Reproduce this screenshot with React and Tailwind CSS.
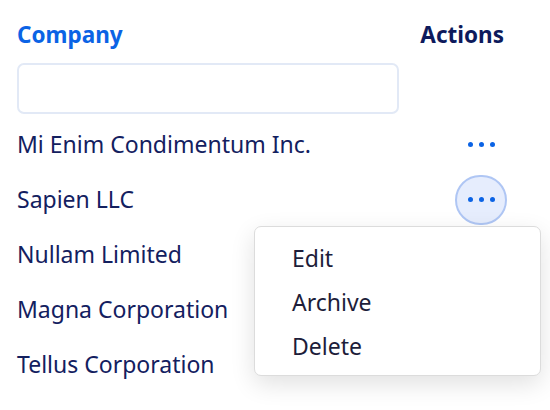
import React from 'react'

const companies = [
  'Mi Enim Condimentum Inc.',
  'Sapien LLC',
  'Nullam Limited',
  'Magna Corporation',
  'Tellus Corporation',
]

function Dots() {
  return (
    <span className="flex items-center gap-[6px]">
      <span className="w-[5px] h-[5px] rounded-full bg-[#0b63e5]" />
      <span className="w-[5px] h-[5px] rounded-full bg-[#0b63e5]" />
      <span className="w-[5px] h-[5px] rounded-full bg-[#0b63e5]" />
    </span>
  )
}

export default function App() {
  return (
    <div className="relative w-[550px] h-[410px] bg-white font-['Noto_Sans',sans-serif] text-[23px]">
      <div className="pl-[17px] pr-[43px] pt-[20px]">
        <div className="flex justify-between items-center h-[30px] text-[22.5px]">
          <span className="font-bold text-[#0b63e5]">Company</span>
          <span className="font-bold text-[#0d1a5c] mr-[3px]">Actions</span>
        </div>
        <div className="mt-[13px] w-[382px] h-[51px] rounded-[7px] border-2 border-[#e2e9f6]" />
        <div className="mt-[3px]">
          {companies.map((c, i) => (
            <div key={c} className="flex items-center justify-between h-[55px]">
              <span className="text-[#13205f]">{c}</span>
              <button
                className={
                  'w-[52px] h-[50px] rounded-full flex items-center justify-center ' +
                  (i === 1 ? 'bg-[#e6edfd] border-2 border-[#afc6f4]' : '')
                }
              >
                <Dots />
              </button>
            </div>
          ))}
        </div>
      </div>

      <div className="absolute left-[254px] top-[226px] w-[287px] h-[150px] bg-white rounded-[7px] border border-[#dcdcdc] shadow-[0_8px_24px_rgba(0,0,0,0.12)] pt-[9px] pl-[37px] text-[#1d1d3a]">
        {['Edit', 'Archive', 'Delete'].map(t => (
          <div key={t} className="h-[44px] flex items-center">{t}</div>
        ))}
      </div>
    </div>
  )
}
